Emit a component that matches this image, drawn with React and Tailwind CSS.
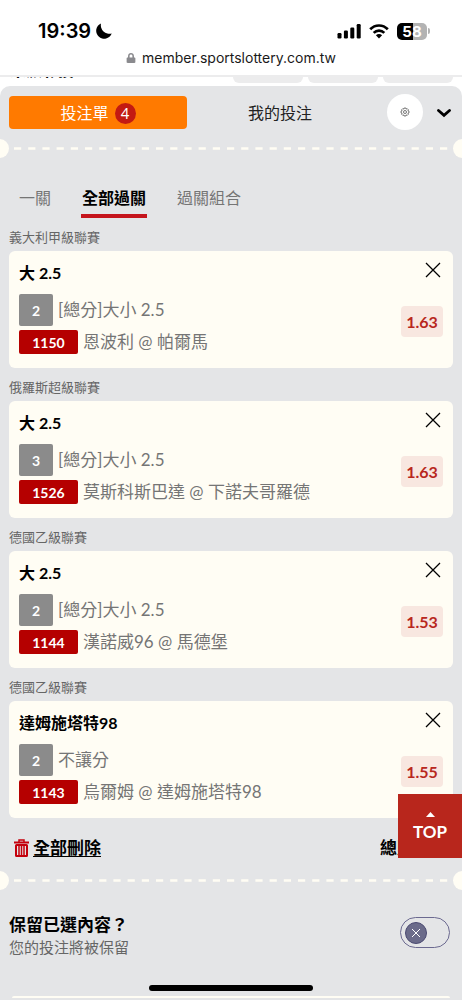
import React from 'react';
import { FaLock } from 'react-icons/fa';

const bets = [
  { id: '1150', league: '義大利甲級聯賽', pick: '大 2.5', min: 2, market: '[總分]大小 2.5', match: '恩波利 @ 帕爾馬', odds: '1.63' },
  { id: '1526', league: '俄羅斯超級聯賽', pick: '大 2.5', min: 3, market: '[總分]大小 2.5', match: '莫斯科斯巴達 @ 下諾夫哥羅德', odds: '1.63' },
  { id: '1144', league: '德國乙級聯賽', pick: '大 2.5', min: 2, market: '[總分]大小 2.5', match: '漢諾威96 @ 馬德堡', odds: '1.53' },
  { id: '1143', league: '德國乙級聯賽', pick: '達姆施塔特98', min: 2, market: '不讓分', match: '烏爾姆 @ 達姆施塔特98', odds: '1.55' },
];

const StatusBar = () => (
  <div className="flex items-center justify-between pt-4 pl-[38px] pr-8 font-['Inter','Noto_Sans_CJK_TC',sans-serif] text-black">
    <div className="flex items-center gap-[5px]">
      <span className="text-[20px] leading-[30px] font-semibold">19:39</span>
      <svg className="size-4" viewBox="0 0 16 16" fill="currentColor">
        <path d="M5 .4A8 8 0 1 0 15.700 10.500A8.600 8.600 0 0 1 5 .4Z" />
      </svg>
    </div>
    <div className="flex items-center gap-2">
      <svg className="h-4 w-6" viewBox="0 0 24 16" fill="currentColor">
        <rect x="0.500" y="10" width="4" height="5.500" rx="1.200" />
        <rect x="6.900" y="7.500" width="4" height="8" rx="1.200" />
        <rect x="13.300" y="4.500" width="4" height="11" rx="1.200" />
        <rect x="19.700" y="1" width="4" height="14.500" rx="1.200" />
      </svg>
      <svg className="h-4 w-5" viewBox="0 0 20 16" fill="none" stroke="currentColor" strokeWidth="2.700">
        <path d="M1.200 6.300C6.100 1.200 13.900 1.200 18.800 6.300" />
        <path d="M4.700 9.900C7.700 6.900 12.300 6.900 15.300 9.900" />
        <path d="M10 15.500L6.900 12.200C8.700 10.600 11.300 10.600 13.100 12.200Z" fill="currentColor" stroke="none" />
      </svg>
      <div className="flex items-center gap-px">
        <div className="flex h-[17px] w-[30px] items-center justify-center rounded-[5px] bg-linear-to-r from-black from-55% to-[#b3b3b3] to-55% text-[15px] leading-none font-bold text-white">
          58
        </div>
        <div className="h-1.5 w-0.5 rounded-r-full bg-[#b3b3b3]"></div>
      </div>
    </div>
  </div>
);

const Divider = () => (
  <div className="flex h-[19px] items-center justify-between overflow-hidden">
    <span className="-ml-2.5 size-[19px] shrink-0 rounded-full bg-[#fffdf4]"></span>
    <svg className="mx-[5px] h-[3px] min-w-0 flex-1">
      <line x1="0" y1="1.500" x2="100%" y2="1.500" stroke="#fffdf4" strokeWidth="2.500" strokeDasharray="7.200 7" />
    </svg>
    <span className="-mr-2.5 size-[19px] shrink-0 rounded-full bg-[#fffdf4]"></span>
  </div>
);

const CloseIcon = () => (
  <svg className="size-4" viewBox="0 0 16 16" fill="none" stroke="currentColor" strokeWidth="1.300">
    <path d="M1 1L15 15M15 1L1 15" />
  </svg>
);

const BetCard = ({ bet }) => (
  <section>
    <h3 className="pt-[7px] pb-0.5 text-[13px] leading-6 text-[#666]">{bet.league}</h3>
    <div className="flex justify-between rounded-md bg-[#fffdf4] px-2.5 pt-2 pb-3.5">
      <div>
        <p className="mb-2 text-[16px] leading-[27px] font-bold text-black">{bet.pick}</p>
        <div className="mb-1 flex items-center gap-[5px]">
          <span className="flex h-8 w-[34px] items-center justify-center rounded-xs bg-[#8b8b8b] text-[14px] font-bold text-white">{bet.min}</span>
          <span className="text-[17px] leading-6 text-[#757575]">{bet.market}</span>
        </div>
        <div className="flex items-center gap-[5px]">
          <span className="flex h-6 w-[59px] items-center justify-center rounded-xs bg-[#b50000] text-[14px] font-bold text-white">{bet.id}</span>
          <span className="text-[17px] leading-6 text-[#757575]">{bet.match}</span>
        </div>
      </div>
      <div className="flex flex-col items-end justify-between pt-[3px] pb-[17px]">
        <button type="button" aria-label="刪除" className="mr-0.5 text-black">
          <CloseIcon />
        </button>
        <span className="flex h-[31px] w-[42px] items-center justify-center rounded-sm bg-[#f8e7e0] text-[16px] font-bold text-[#b8281e]">{bet.odds}</span>
      </div>
    </div>
  </section>
);

const App = () => {
  return (
    <div className="relative min-h-screen overflow-hidden bg-white font-['Lato','Noto_Sans_CJK_TC',sans-serif] text-[17px]">
      <header className="border-b-2 border-[#ececed] bg-white pb-1.5">
        <StatusBar />
        <div className="flex items-center justify-center gap-1.5 font-['Inter',sans-serif] text-[14px] leading-[23px] text-[#1a1a1a]">
          <FaLock className="size-2.5 text-[#8a8a8e]" />
          <span>member.sportslottery.com.tw</span>
        </div>
      </header>

      <div className="flex h-[9px] items-start justify-between pr-[9px] pl-2.5">
        <div className="flex h-[3px] items-end overflow-hidden text-[16px] leading-5 font-bold text-black">未派彩投</div>
        <div className="flex gap-[5px]">
          <div className="h-1.5 w-[70px] rounded-b-md bg-[#ececed]"></div>
          <div className="h-1.5 w-[70px] rounded-b-md bg-[#ececed]"></div>
          <div className="h-1.5 w-[70px] rounded-b-md bg-[#ececed]"></div>
        </div>
      </div>

      <main className="rounded-t-[10px] bg-[#e4e5e7] pb-0.5">
        <div className="flex items-center pt-2 pr-[11px] pl-[9px]">
          <button type="button" className="flex h-[33px] flex-1 items-center justify-center gap-1.5 rounded-sm bg-[#ff7a00] pt-0.5 text-[16px] text-white">
            投注單
            <span className="flex size-[21px] items-center justify-center rounded-full bg-[#c31a12] text-[15px] leading-none">4</span>
          </button>
          <button type="button" className="h-[33px] flex-1 pt-0.5 pl-1 text-[16px] text-[#222]">我的投注</button>
          <div className="flex items-center gap-3.5 pl-[18px]">
            <button type="button" aria-label="設定" className="flex size-9 items-center justify-center rounded-full bg-white text-[#555]">
              <svg className="size-2.5" viewBox="0 0 20 20" fill="none" stroke="currentColor" strokeWidth="1.600">
                <path d="M8.300 1h3.400l.6 2.200 2.100-1 2.400 2.400-1 2.100 2.200.6v3.400l-2.200.6 1 2.100-2.400 2.400-2.100-1-.6 2.200H8.300l-.6-2.200-2.100 1-2.400-2.400 1-2.100L2 10.700V7.300l2.200-.6-1-2.100 2.400-2.400 2.100 1z" transform="translate(0 1)" />
                <circle cx="10" cy="10" r="3" />
              </svg>
            </button>
            <button type="button" aria-label="收合" className="text-black">
              <svg className="h-4 w-3.5" viewBox="0 0 14 16" fill="none" stroke="currentColor" strokeWidth="2.800" strokeLinecap="round">
                <path d="M1.500 6.500L7 11.300L12.500 6.500" />
              </svg>
            </button>
          </div>
        </div>

        <div className="pt-[9px]">
          <Divider />
        </div>

        <nav className="flex gap-[29px] px-[18px] pt-[27px] text-[16px] text-[#757575]">
          <button type="button" className="h-[33px] border-b-4 border-transparent px-px pb-1">一關</button>
          <button type="button" className="h-[33px] border-b-4 border-[#c5141c] px-px pb-1 font-bold text-black">全部過關</button>
          <button type="button" className="h-[33px] border-b-4 border-transparent px-px pb-1">過關組合</button>
        </nav>

        <div className="px-[9px]">
          {bets.map((bet) => (
            <BetCard key={bet.id} bet={bet} />
          ))}
        </div>

        <div className="flex items-center justify-between pt-[18px] pr-3.5 pb-[11px] pl-3.5 text-black">
          <button type="button" className="flex items-center gap-1 font-bold">
            <svg className="h-[18px] w-[15px]" viewBox="0 0 15 18" fill="none" stroke="#c4000c">
              <path d="M0 3.500H15" strokeWidth="2" />
              <path d="M5 3V1H10V3" strokeWidth="1.500" />
              <rect x="2" y="6" width="11" height="11" rx="0.500" strokeWidth="2" />
              <path d="M5 7V16M7.500 7V16M10 7V16" strokeWidth="1.500" />
            </svg>
            <span className="leading-6 underline underline-offset-2">全部刪除</span>
          </button>
          <span className="leading-6 font-bold">總賠率：</span>
        </div>

        <Divider />

        <label className="flex items-start justify-between pt-[23px] pr-3 pb-[39px] pl-[9px]">
          <span>
            <span className="block leading-6 font-bold text-black">保留已選內容？</span>
            <span className="block text-[15px] leading-5 text-[#666]">您的投注將被保留</span>
          </span>
          <span className="relative mt-1 flex h-[31px] w-[50px] items-center rounded-full border border-[#6b6990] px-1">
            <input type="checkbox" role="switch" className="absolute inset-0 size-full cursor-pointer opacity-0" />
            <span className="flex size-[22px] items-center justify-center rounded-full border border-[#4b4a72] bg-[#6b6b8a] text-white">
              <svg className="size-2.5" viewBox="0 0 10 10" fill="none" stroke="currentColor">
                <path d="M1 1L9 9M9 1L1 9" />
              </svg>
            </span>
          </span>
        </label>
        <div className="mx-3 h-0.5 rounded-t-sm bg-[#fffdf4]"></div>
      </main>

      <button type="button" className="fixed right-0 bottom-[142px] flex size-16 flex-col items-center justify-center gap-1 bg-[#b8261c] pt-0.5 text-[17px] leading-[22px] font-bold text-white">
        <svg className="h-[5px] w-[9px]" viewBox="0 0 9 5" fill="currentColor">
          <path d="M4.500 0L9 5H0Z" />
        </svg>
        TOP
      </button>
      <div className="fixed bottom-[9px] left-1/2 h-1.5 w-[164px] -translate-x-1/2 rounded-full bg-black"></div>
    </div>
  );
};

export default App;
